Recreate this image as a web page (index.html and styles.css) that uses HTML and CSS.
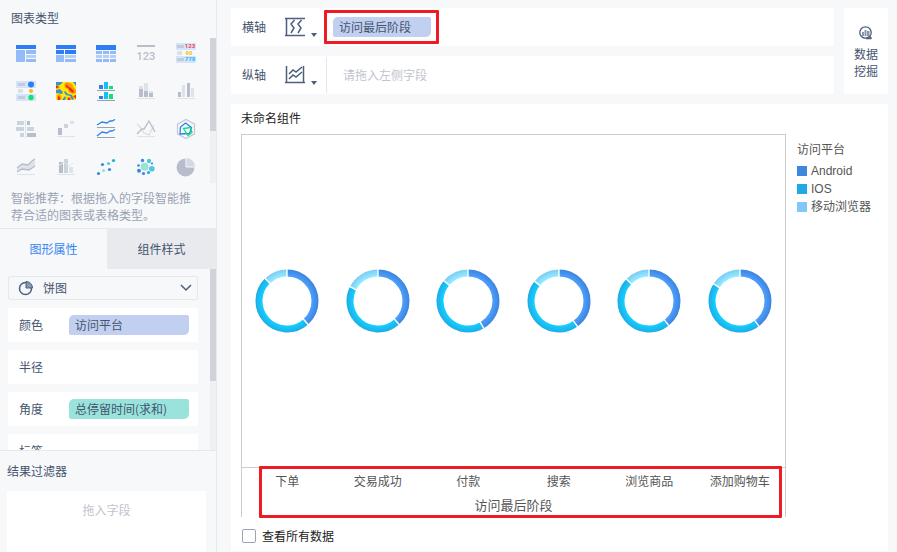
FILE: index.html
```html
<!DOCTYPE html>
<html lang="zh-CN">
<head>
    <meta charset="UTF-8">
    <meta name="viewport" content="width=device-width, initial-scale=1.0">
    <title>未命名组件</title>
    <link rel="stylesheet" href="styles.css">
</head>
<body>
    <aside class="sidebar">
        <section class="chart-types">
            <h2 class="section-title">图表类型</h2>
            <div class="type-grid">
                <button class="type-btn" aria-label="分组表">
                    <svg viewBox="0 0 20 20"><path fill="#2f7cf6" d="M0 2h20v4H0z"/><path fill="#94bbf8" d="M0 7h9v12H0zM10 7h10v4H10zM10 16h10v3H10z"/><path fill="#b4cff5" d="M10 12h10v3H10z"/></svg>
                </button>
                <button class="type-btn" aria-label="交叉表">
                    <svg viewBox="0 0 20 20"><path fill="#2f7cf6" d="M0 2h20v4H0zM0 7h8v4H0zM9 7h11v4H9z"/><path fill="#94bbf8" d="M0 12h8v7H0zM9 16h11v3H9z"/><path fill="#b4cff5" d="M9 12h11v3H9z"/></svg>
                </button>
                <button class="type-btn" aria-label="明细表">
                    <svg viewBox="0 0 20 20"><path fill="#2f7cf6" d="M0 2h20v5H0z"/><path fill="#94bbf8" d="M0 8h6v3H0zM7 8h6v3H7zM14 8h6v3h-6zM0 16h6v3H0zM7 16h6v3H7zM14 16h6v3h-6z"/><path fill="#b4cff5" d="M0 12h6v3H0zM7 12h6v3H7zM14 12h6v3h-6z"/></svg>
                </button>
                <button class="type-btn" aria-label="指标卡">
                    <svg viewBox="0 0 20 20"><path fill="#b7becb" d="M1 2h18v2H1z"/><text class="icon-number" x="10" y="17">123</text></svg>
                </button>
                <button class="type-btn" aria-label="颜色表格">
                    <svg viewBox="0 0 20 20"><path fill="#d3e5fd" d="M0 0h20v7H0zM0 13h20v7H0z"/><path fill="#c5cad3" d="M1 2h7v3H1zM1 15h7v3H1z"/><path fill="#dcdfe5" d="M1 8h5v4H1z"/><text class="icon-digit" x="14" y="5" fill="#f5434f">123</text><text class="icon-digit" x="13" y="12" fill="#fdb913">90</text><text class="icon-digit" x="14" y="18" fill="#1cb9f2">778</text></svg>
                </button>

                <button class="type-btn" aria-label="图标表格">
                    <svg viewBox="0 0 20 20"><path fill="#d3e5fd" d="M0 0h20v7H0zM0 13h20v7H0z"/><path fill="#c5cad3" d="M2 2h7v3H2zM2 15h7v3H2z"/><path fill="#dcdfe5" d="M2 8h5v4H2z"/><circle cx="15" cy="3.5" r="3" fill="#2f7cf6"/><circle cx="15" cy="10" r="2" fill="#fdb913"/><circle cx="15" cy="16.5" r="2.7" fill="#12e276"/></svg>
                </button>
                <button class="type-btn" aria-label="热力区域图">
                    <svg viewBox="0 0 20 20"><path fill="#fdea00" d="M0 1h20v18H0z"/><path fill="#3d8fd8" d="M0 1h7L4 4 0 5zM0 9l4-1 3 3-1 2-6-1zM9 10l3 3 4 1 2 4-2 1-2-4-4-1-2-3zM17 1h3v4zM6 19l3-4 1 2-1 2z"/><path fill="#ff9c00" d="M8 3l3-2 5 2 2 4 2 2v3l-4 1-3-2-1-3-3-1zM1 14l3-1 2 4-2 2H1zM11 16h4v3h-4zM0 5l3-1 1 3-4 1z"/><path fill="#f5291c" d="M10 3l3 3 2 1 3 3-1 2-3-2-2-3-2-1zM2 15l2 1v3H2zM12 17h2v2h-2zM0 5h2v2H0zM17 15l3-1v4z"/></svg>
                </button>
                <button class="type-btn" aria-label="多系列柱形图">
                    <svg viewBox="0 0 20 20"><path fill="#2f7cf6" d="M3 4h4v4H3zM3 15h4v3H3z"/><path fill="#17c0ee" d="M8 1h4v7H8zM8 11h4v7H8z"/><path fill="#12e276" d="M13 5h4v3h-4zM13 13h4v5h-4z"/><path fill="#97a1b0" d="M1 9h18v1H1zM1 19h18v1H1z"/></svg>
                </button>
                <button class="type-btn" aria-label="堆积柱形图">
                    <svg viewBox="0 0 20 20"><path fill="#dfe2e9" d="M3 5h4v3H3zM8 2h4v8H8zM13 10h4v2h-4zM1 17h18v1H1z"/><path fill="#b7becb" d="M3 8h4v8H3zM8 10h4v6H8zM13 12h4v4h-4z"/></svg>
                </button>
                <button class="type-btn" aria-label="分组柱形图">
                    <svg viewBox="0 0 20 20"><path fill="#b7becb" d="M2 11h3v5H2zM11 2h3v14h-3z"/><path fill="#dfe2e9" d="M6 4h3v12H6zM15 7h3v9h-3zM1 17h18v1H1z"/></svg>
                </button>

                <button class="type-btn" aria-label="对比柱状图">
                    <svg viewBox="0 0 20 20"><path fill="#cdd3de" d="M1 2h7v4H1zM0 8h8v4H0zM11 8h7v4h-7zM4 14h4v4H4z"/><path fill="#b7becb" d="M11 2h3v4h-3zM11 14h9v4h-9z"/><path fill="#dfe2e9" d="M9 1h1v18H9z"/></svg>
                </button>
                <button class="type-btn" aria-label="瀑布图">
                    <svg viewBox="0 0 20 20"><path fill="#b7becb" d="M2 9h4v7H2z"/><path fill="#cdd3de" d="M8 5h4v4H8z"/><path fill="#dfe2e9" d="M14 2h4v3h-4zM1 17h18v1H1z"/></svg>
                </button>
                <button class="type-btn" aria-label="多系列折线图">
                    <svg viewBox="0 0 20 20"><path class="line" stroke="#2f86e8" d="M1 6l5-3 5 1 3-2h2l3-1.500M1 17l5-4 5 1 3-2h2l3-1.500"/><path fill="#97a1b0" d="M1 8h18v1H1zM1 18h18v1H1z"/></svg>
                </button>
                <button class="type-btn" aria-label="折线图">
                    <svg viewBox="0 0 20 20"><path class="line" stroke="#d8dce4" d="M1 5l3 3 4 6 5 2 5-10"/><path class="line" stroke="#b7becb" d="M1 15l5-5 2 0 5-8 6 11"/><path fill="#dfe2e9" d="M1 17h18v1H1z"/></svg>
                </button>
                <button class="type-btn" aria-label="雷达图">
                    <svg viewBox="0 0 20 20"><path class="line" stroke="#c3c9d3" d="M10 .5l8.500 4.700v9.600L10 19.500l-8.500-4.700V5.200z"/><path class="line" stroke="#2f7cf6" d="M9.500 4l6 4.500-2 6-9.500.5.500-7z"/><path class="line" stroke="#12e276" d="M7.500 9.500l7-1 1.500 5-4 3z"/></svg>
                </button>

                <button class="type-btn" aria-label="面积图">
                    <svg viewBox="0 0 20 20"><path fill="#dfe2e9" d="M1 11l5-4 5 1 8-6v7l-6 4-6-1-6 3zM1 17h18v1H1z"/><path class="line" stroke="#b7becb" d="M1 11l5-4 6 1 4-4 3-2M1 15l5-3 7 1 6-4"/></svg>
                </button>
                <button class="type-btn" aria-label="组合图">
                    <svg viewBox="0 0 20 20"><path fill="#b7becb" d="M3 5h4v11H3z"/><path fill="#cdd3de" d="M8 2h4v14H8z"/><path fill="#dfe2e9" d="M13 10h4v6h-4zM1 17h18v1H1z"/><path fill="none" stroke="#e6e9ee" d="M1 10l7-5 5 4 5-3"/></svg>
                </button>
                <button class="type-btn" aria-label="散点图">
                    <svg viewBox="0 0 20 20"><g fill="#3d87dc"><circle cx="6.500" cy="7.500" r="1.600"/><circle cx="13.500" cy="12.500" r="1.600"/><circle cx="2.500" cy="16.500" r="1.600"/></g><circle cx="17.500" cy="3.500" r="1.600" fill="#22a9e8"/><circle cx="12.500" cy="6.500" r="1.600" fill="#56c9d9"/><circle cx="7.500" cy="13.500" r="1.600" fill="#98e3d6"/></svg>
                </button>
                <button class="type-btn" aria-label="气泡图">
                    <svg viewBox="0 0 20 20"><circle cx="8.700" cy="9.700" r="4" fill="#98e3d6"/><g fill="#4fc8da"><circle cx="13" cy="4" r="2.200"/><circle cx="15.800" cy="11.700" r="2.800"/></g><g fill="#3d87dc"><circle cx="6.500" cy="3.500" r="1.700"/><circle cx="2.500" cy="8.500" r="1.300"/><circle cx="3" cy="13.700" r="2"/><circle cx="7.500" cy="16.500" r="1.600"/><circle cx="16" cy="6.500" r="1.100"/></g><circle cx="12.500" cy="15.500" r="1.600" fill="#22a9e8"/></svg>
                </button>
                <button class="type-btn" aria-label="饼图">
                    <svg viewBox="0 0 20 20"><circle cx="9.500" cy="10.500" r="9" fill="#b7becb"/><path fill="#d3d8e1" stroke="#f7f8fa" d="M10 .5v9.500h9.500A9.500 9.500 0 0 0 10 .5z"/></svg>
                </button>
            </div>
            <div class="scrollbar types-scroll"><div class="thumb" style="height: 64%"></div></div>
            <p class="hint">智能推荐：根据拖入的字段智能推荐合适的图表或表格类型。</p>
        </section>

        <div class="tabs">
            <button class="tab active">图形属性</button>
            <button class="tab">组件样式</button>
        </div>

        <section class="properties">
            <div class="property-list">
                <div class="shape-select">
                    <svg class="shape-icon" viewBox="0 0 16 16"><circle cx="7.500" cy="8.500" r="6" fill="none" stroke="#4c5f7f" stroke-width="1.500"/><path fill="#8b97ab" stroke="#4c5f7f" d="M8 1.500a6.500 6.500 0 0 1 6.500 6.500H8z"/></svg>
                    <select aria-label="图形">
                        <option>饼图</option>
                    </select>
                    <svg class="shape-arrow" viewBox="0 0 12 8"><path fill="none" stroke="#4c5f7f" stroke-width="1.500" d="M1 1l5 5 5-5"/></svg>
                </div>
                <div class="property">
                    <span class="property-name">颜色</span>
                    <span class="field dimension">访问平台</span>
                </div>
                <div class="property">
                    <span class="property-name">半径</span>
                </div>
                <div class="property">
                    <span class="property-name">角度</span>
                    <span class="field measure">总停留时间(求和)</span>
                </div>
                <div class="property">
                    <span class="property-name">标签</span>
                </div>
            </div>
            <div class="scrollbar props-scroll"><div class="thumb" style="height: 62%"></div></div>
        </section>

        <section class="filters">
            <h2 class="filter-title">结果过滤器</h2>
            <div class="filter-drop">拖入字段</div>
        </section>
    </aside>

    <main class="main">
        <div class="top">
            <div class="axes">
                <div class="axis">
                    <span class="axis-name">横轴</span>
                    <button class="axis-btn" aria-label="横轴设置">
                        <svg class="axis-icon" viewBox="0 0 20 20"><path d="M0 1.500h20M0 18.500h20M1.500 1v18M9.500 3L6 7l3 4-3 5M16.500 3L13 7l3 4-3 5"/></svg>
                        <svg class="caret" viewBox="0 0 6 4"><path d="M0 0h6L3 4z"/></svg>
                    </button>
                    <div class="axis-drop marked">
                        <span class="field dimension">访问最后阶段</span>
                    </div>
                </div>
                <div class="axis">
                    <span class="axis-name">纵轴</span>
                    <button class="axis-btn" aria-label="纵轴设置">
                        <svg class="axis-icon" viewBox="0 0 20 20"><path d="M1.500 1v17M18.500 1v17M0 17.500h20M4 9l4-4 3 2 6-5M4 14l4-4 3 2 6-5"/></svg>
                        <svg class="caret" viewBox="0 0 6 4"><path d="M0 0h6L3 4z"/></svg>
                    </button>
                    <div class="axis-drop">
                        <span class="placeholder">请拖入左侧字段</span>
                    </div>
                </div>
            </div>
            <button class="mining">
                <svg class="mining-icon" viewBox="0 0 14 14"><circle cx="6.500" cy="6.500" r="5.700" fill="none" stroke="#4c5f7f" stroke-width="1.300"/><path fill="#8b97ab" d="M3 6h2v4H3zM5.500 4h2v6h-2zM8 5h2.500v5H8z"/><path fill="none" stroke="#4c5f7f" stroke-width="1.500" d="M7 12.500h5.500M10 10l2.500 2.500"/></svg>
                <span>数据<br>挖掘</span>
            </button>
        </div>

        <section class="panel">
            <h1 class="panel-title">未命名组件</h1>
            <div class="panel-body">
                <div class="chart">
                    <div class="plot" id="plot"></div>
                    <div class="x-axis">
                        <div class="categories" id="categories"></div>
                        <div class="axis-title">访问最后阶段</div>
                    </div>
                </div>
                <div class="legend">
                    <div class="legend-title">访问平台</div>
                    <ul>
                        <li><i class="swatch android"></i>Android</li>
                        <li><i class="swatch ios"></i>IOS</li>
                        <li><i class="swatch browser"></i>移动浏览器</li>
                    </ul>
                </div>
            </div>
            <label class="all-data"><input type="checkbox">查看所有数据</label>
        </section>
    </main>

    <svg class="defs" width="0" height="0" aria-hidden="true">
        <defs>
            <radialGradient id="gAndroid" gradientUnits="userSpaceOnUse" cx="32" cy="32" r="32">
                <stop offset=".76" stop-color="#4ea1ff"/><stop offset="1" stop-color="#3b82dc"/>
            </radialGradient>
            <radialGradient id="gIos" gradientUnits="userSpaceOnUse" cx="32" cy="32" r="32">
                <stop offset=".76" stop-color="#12d2ff"/><stop offset="1" stop-color="#1fa9e4"/>
            </radialGradient>
            <radialGradient id="gBrowser" gradientUnits="userSpaceOnUse" cx="32" cy="32" r="32">
                <stop offset=".76" stop-color="#93f0ff"/><stop offset="1" stop-color="#7cc8f5"/>
            </radialGradient>
        </defs>
    </svg>
    <script src="chart.js"></script>
</body>
</html>
```
FILE: chart.js
```js
// end angles (clockwise from 12 o'clock) of the Android and IOS slices
const stages = [
    { name: '下单', android: 138, ios: 316 },
    { name: '交易成功', android: 138, ios: 297 },
    { name: '付款', android: 150, ios: 310 },
    { name: '搜索', android: 144, ios: 309 },
    { name: '浏览商品', android: 141, ios: 314 },
    { name: '添加购物车', android: 143, ios: 303 }
];

function slice(from, to, fill) {
    return `<circle cx="32" cy="32" r="28" fill="none" stroke="url(#${fill})" stroke-width="7" pathLength="360"
        stroke-dasharray="${to - from} 360" transform="rotate(${from - 90} 32 32)"/>`;
}

function gap(angle) {
    return `<path d="M32 0v8" stroke="#fff" stroke-width="1.4" transform="rotate(${angle} 32 32)"/>`;
}

const plot = document.getElementById('plot');
const categories = document.getElementById('categories');

stages.forEach(stage => {
    plot.innerHTML += `<svg class="donut" viewBox="0 0 64 64">
        ${slice(0, stage.android, 'gAndroid')}
        ${slice(stage.android, stage.ios, 'gIos')}
        ${slice(stage.ios, 360, 'gBrowser')}
        ${gap(0)}${gap(stage.android)}${gap(stage.ios)}
    </svg>`;
    categories.innerHTML += `<span>${stage.name}</span>`;
});
```
FILE: styles.css
```css
*,
*::after {
    box-sizing: border-box;
}
body {
    margin: 0;
    display: flex;
    height: 100vh;
    overflow: hidden;
    background-color: #f7f8fa;
    color: #44546e;
    font-family: "Noto Sans CJK SC", sans-serif;
    font-size: 12px;
    line-height: 18px;
}
h1, h2, p, ul {
    margin: 0;
    padding: 0;
    font-size: 12px;
    font-weight: normal;
}
button {
    margin: 0;
    padding: 0;
    border: none;
    background: none;
    color: inherit;
    font: inherit;
    cursor: pointer;
}
svg {
    display: block;
}
.defs {
    position: absolute;
}

/* left side */
.sidebar {
    display: flex;
    flex-direction: column;
    flex: 0 0 217px;
    border-right: 1px solid #e6e8ec;
}
.chart-types {
    position: relative;
    padding: 9px 16px 5px;
    border-bottom: 1px solid #e6e8ec;
}
.section-title {
    margin-left: -5px;
}
.type-grid {
    display: grid;
    grid-template-columns: repeat(5, 20px);
    gap: 18px 20px;
    padding-top: 16px;
}
.type-btn {
    width: 20px;
    height: 20px;
}
.line {
    fill: none;
    stroke-width: 1.3;
}
.icon-number {
    fill: #b7becb;
    font-family: Roboto, sans-serif;
    font-size: 11px;
    font-weight: 500;
    text-anchor: middle;
}
.icon-digit {
    font-family: Roboto, sans-serif;
    font-size: 6px;
    font-weight: bold;
    text-anchor: middle;
}
.hint {
    margin: 12px 0 0 -5px;
    width: 184px;
    color: #9aa3b3;
    line-height: 17px;
}
.scrollbar {
    position: absolute;
    right: 0;
    width: 6px;
    background-color: #eff0f3;
}
.thumb {
    background-color: #d0d2d9;
}
.types-scroll {
    top: 38px;
    height: 145px;
}
.props-scroll {
    top: 0;
    bottom: 0;
}
.tabs {
    display: grid;
    grid-template-columns: 107px 1fr;
    height: 40px;
}
.tab {
    background-color: #e8eaed;
}
.tab.active {
    background-color: transparent;
    color: #3685f2;
}
.properties {
    position: relative;
    flex: 1;
    min-height: 0;
    overflow: hidden;
}
.property-list {
    display: flex;
    flex-direction: column;
    gap: 8px;
    padding: 7px 18px 0 8px;
}
.shape-select {
    position: relative;
    height: 24px;
}
.shape-select select {
    width: 100%;
    height: 24px;
    padding: 0 34px;
    border: 1px solid #e6e8ec;
    border-radius: 2px;
    background: none;
    color: inherit;
    font: inherit;
    appearance: none;
}
.shape-icon {
    position: absolute;
    left: 10px;
    top: 4px;
    width: 16px;
}
.shape-arrow {
    position: absolute;
    right: 6px;
    top: 8px;
    width: 12px;
}
.property {
    display: flex;
    align-items: center;
    flex: 0 0 34px;
    padding: 0 9px 0 11px;
    background-color: #fff;
}
.property-name {
    width: 50px;
}
.field {
    flex: 1;
    height: 20px;
    padding-left: 6px;
    border-radius: 5px 2px;
    line-height: 20px;
}
.dimension {
    background-color: #c1cff0;
}
.measure {
    background-color: #9ae3dc;
}
.filters {
    flex: 0 0 102px;
    display: flex;
    flex-direction: column;
    padding: 11px 10px 0 7px;
    border-top: 1px solid #e6e8ec;
}
.filter-drop {
    flex: 1;
    margin-top: 11px;
    padding-top: 10px;
    background-color: #fff;
    color: #bfc4cf;
    text-align: center;
}

/* right side */
.main {
    display: flex;
    flex-direction: column;
    flex: 1;
    gap: 10px;
    min-width: 0;
    padding: 8px 9px 1px 14px;
}
.top {
    display: flex;
    gap: 10px;
}
.axes {
    display: flex;
    flex-direction: column;
    flex: 1;
    gap: 10px;
}
.axis {
    display: flex;
    align-items: center;
    height: 38px;
    padding-left: 11px;
    background-color: #fff;
}
.axis-name {
    width: 43px;
}
.axis-btn {
    display: flex;
    align-items: flex-end;
    gap: 6px;
    width: 41px;
}
.axis-icon {
    width: 20px;
    height: 20px;
    fill: none;
    stroke: #4c5f7f;
    stroke-width: 1.5;
}
.caret {
    width: 6px;
    height: 4px;
    fill: #4c5f7f;
}
.axis-drop {
    position: relative;
    display: flex;
    align-items: center;
    flex: 1;
    height: 36px;
    padding-left: 6px;
    border-left: 1px solid #e6e8ec;
}
.axis-drop .field {
    flex: 0 0 98px;
}
.placeholder {
    padding-left: 10px;
    color: #bfc4cf;
}
.marked::after,
.x-axis::after {
    content: "";
    position: absolute;
    border: 3px solid #ed1c24;
    border-radius: 1px;
    pointer-events: none;
}
.marked::after {
    left: -3px;
    top: 1px;
    width: 115px;
    height: 34px;
}
.mining {
    display: flex;
    flex-direction: column;
    align-items: center;
    justify-content: center;
    gap: 5px;
    flex: 0 0 44px;
    padding-top: 3px;
    background-color: #fff;
    line-height: 17px;
}
.mining-icon {
    width: 14px;
    height: 14px;
}
.panel {
    display: flex;
    flex-direction: column;
    flex: 1;
    padding: 5px 0 6px 10px;
    background-color: #fff;
    color: #333;
}
.panel-title {
    color: #222;
}
.panel-body {
    display: flex;
    flex: 1;
    margin-top: 7px;
}
.chart {
    display: flex;
    flex-direction: column;
    flex: 1;
    border: 1px solid #ccc;
    border-bottom: none;
}
.plot {
    display: grid;
    grid-template-columns: repeat(6, 1fr);
    align-items: center;
    justify-items: center;
    flex: 1;
    border-bottom: 1px solid #ccc;
}
.donut {
    width: 64px;
    height: 64px;
}
.x-axis {
    position: relative;
    height: 49px;
    padding-top: 4px;
    color: #555;
    text-align: center;
}
.x-axis::after {
    left: 17px;
    right: 3px;
    top: -2px;
    bottom: -1px;
}
.categories {
    display: grid;
    grid-template-columns: repeat(6, 1fr);
}
.axis-title {
    padding-top: 6px;
    font-size: 13px;
}
.legend {
    flex: 0 0 102px;
    padding: 7px 0 0 11px;
    color: #555;
    font-family: "Liberation Sans", "Noto Sans CJK SC", sans-serif;
}
.legend ul {
    padding-top: 3px;
    list-style: none;
}
.legend li {
    display: flex;
    align-items: center;
    gap: 4px;
}
.swatch {
    width: 10px;
    height: 10px;
}
.android {
    background-color: #3d87dc;
}
.ios {
    background-color: #21a9e6;
}
.browser {
    background-color: #7fc8f7;
}
.all-data {
    display: flex;
    align-items: center;
    gap: 6px;
    margin-top: 10px;
    padding-left: 1px;
    color: #222;
}
.all-data input {
    width: 14px;
    height: 14px;
    margin: 0;
    border: 1px solid #9aa5b8;
    border-radius: 2px;
    background-color: #fff;
    appearance: none;
}
```
